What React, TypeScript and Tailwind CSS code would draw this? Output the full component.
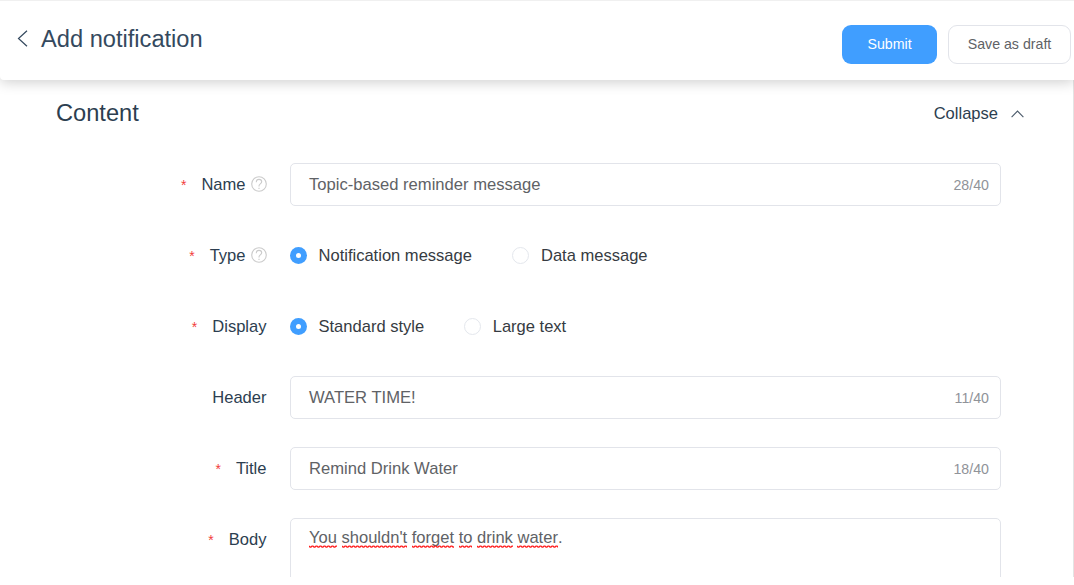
import React from "react";

function Help() {
  return (
    <svg className="mb-px ml-[5px] h-4 w-4 shrink-0" viewBox="0 0 16 16" fill="none" stroke="#cbcbcb" strokeWidth="1.1">
      <circle cx="8" cy="8" r="7.3" />
      <path d="M5.3 6.2C5.3 4.3 6.4 3.4 8 3.4s2.7 1 2.7 2.4c0 2-2.7 2.2-2.7 4.1v.7M8 11.7v1.3" />
    </svg>
  );
}

type RowProps = { label: string; required?: boolean; help?: boolean; children: React.ReactNode };

function Row({ label, required = true, help, children }: RowProps) {
  return (
    <div className="flex h-[71px] shrink-0 items-start">
      <div className="mr-[23.5px] flex h-[43px] w-[266.5px] shrink-0 items-center justify-end text-[#2c3e50]">
        {required && <span className="mr-[15px] mt-px text-[14px] text-[#f23c3c]">*</span>}
        <span>{label}</span>
        {help && <Help />}
      </div>
      {children}
    </div>
  );
}

function Field({ value, count }: { value: string; count: string }) {
  return (
    <div className="flex h-[43px] w-[711px] items-center justify-between rounded-[5px] border border-[#e2e4ea] bg-white pl-[18px] pr-[11px] text-[#606266]">
      <span className="text-[16.6px]">{value}</span>
      <span className="mt-px text-[14.2px] text-[#909399]">{count}</span>
    </div>
  );
}

function Radio({ label, checked }: { label: string; checked?: boolean }) {
  return (
    <div className="flex h-[43px] items-center text-[#363b42]">
      {checked ? (
        <span className="mb-px flex h-[17px] w-[17px] items-center justify-center rounded-full bg-[#409eff]">
          <span className="h-[5px] w-[5px] rounded-full bg-white" />
        </span>
      ) : (
        <span className="mb-px h-[17px] w-[17px] rounded-full border border-[#e4e7ed]" />
      )}
      <span className="ml-[11.5px]">{label}</span>
    </div>
  );
}

const squiggle = "M0 1" + "l1 1h1l1 -1h1".repeat(30);

function Misspelled({ children }: { children: string }) {
  return (
    <span className="relative inline-block">
      {children}
      <svg className="absolute bottom-0 left-0 h-[3px] w-full overflow-hidden" fill="none" stroke="#ff1c1c" strokeWidth="1.25">
        <path d={squiggle} />
      </svg>
    </span>
  );
}

export default function App() {
  return (
    <div className="h-[585px] w-[1074px] overflow-hidden bg-white font-['Liberation_Sans',Arial,sans-serif] text-[16.55px] leading-[20px]">
      <div className="flex h-[577px] flex-col overflow-hidden">
        <header className="relative z-10 flex h-20 shrink-0 justify-between rounded-bl-[4px] border-t border-[#f0f0f0] bg-white pl-[17px] pr-[3px] shadow-[0_2px_14px_rgba(0,0,0,0.2)]">
          <div className="flex h-[76px] items-center text-[#34495e]">
            <svg className="mb-px h-[17px] w-[11px]" viewBox="0 0 11 17" fill="none" stroke="currentColor" strokeWidth="1.2">
              <path d="M10 .8 1.5 8.5 10 16.2" />
            </svg>
            <h1 className="ml-[13px] text-[23.65px] leading-[28px]">Add notification</h1>
          </div>
          <div className="flex gap-[11px] pt-6 text-[14.2px]">
            <button className="h-[39px] w-[95px] rounded-[9px] bg-[#409eff] pb-[2px] text-white">Submit</button>
            <button className="h-[39px] w-[123px] rounded-[9px] border border-[#e2e4ea] pb-[2px] text-[#606266]">Save as draft</button>
          </div>
        </header>
        <main className="flex min-h-0 flex-1 flex-col overflow-hidden border-r border-[#e4e4e4]">
          <div className="mb-[17px] flex h-[66px] shrink-0 items-center justify-between pl-14 pr-[49px] text-[#2c3e50]">
            <h2 className="text-[23.65px] leading-[28px]">Content</h2>
            <div className="flex items-center">
              <span className="pt-[2px]">Collapse</span>
              <svg className="ml-[13px] mt-px h-2 w-[13px]" viewBox="0 0 13 8" fill="none" stroke="#4b5a6a" strokeWidth="1.1">
                <path d="M.6 7.2 6.5 1.1l5.9 6.1" />
              </svg>
            </div>
          </div>
          <Row label="Name" help>
            <Field value="Topic-based reminder message" count="28/40" />
          </Row>
          <Row label="Type" help>
            <div className="flex gap-[40.5px]">
              <Radio label="Notification message" checked />
              <Radio label="Data message" />
            </div>
          </Row>
          <Row label="Display">
            <div className="flex gap-[40px]">
              <Radio label="Standard style" checked />
              <Radio label="Large text" />
            </div>
          </Row>
          <Row label="Header" required={false}>
            <Field value="WATER TIME!" count="11/40" />
          </Row>
          <Row label="Title">
            <Field value="Remind Drink Water" count="18/40" />
          </Row>
          <Row label="Body">
            <div className="h-[90px] w-[711px] rounded-[5px] border border-[#e2e4ea] pl-[18px] pt-[9px] text-[#606266]">
              {["You", "shouldn't", "forget", "to", "drink", "water"].map((word, i) => (
                <React.Fragment key={word}>
                  {i > 0 && " "}
                  <Misspelled>{word}</Misspelled>
                </React.Fragment>
              ))}
              .
            </div>
          </Row>
        </main>
      </div>
    </div>
  );
}
